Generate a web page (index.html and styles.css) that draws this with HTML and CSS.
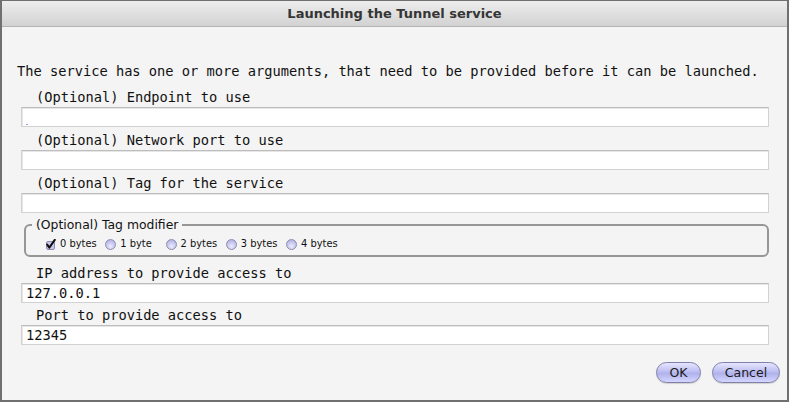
FILE: index.html
```html
<!DOCTYPE html>
<html>
<head>
<meta charset="utf-8">
<link rel="stylesheet" href="styles.css">
</head>
<body>
<div class="window">
  <div class="titlebar">Launching the Tunnel service</div>
  <div class="content">
    <p class="intro">The service has one or more arguments, that need to be provided before it can be launched.</p>

    <div class="group first">
      <div class="label">(Optional) Endpoint to use</div>
      <div class="input focused"></div>
    </div>
    <div class="group">
      <div class="label">(Optional) Network port to use</div>
      <div class="input"></div>
    </div>
    <div class="group">
      <div class="label">(Optional) Tag for the service</div>
      <div class="input"></div>
    </div>

    <fieldset class="options">
      <legend>(Optional) Tag modifier</legend>
      <div class="choices">
        <div class="choice">
          <svg class="check" width="11" height="11" viewBox="0 0 11 11">
            <rect x="1.5" y="2.5" width="8" height="8" rx="1.5" fill="#c9c9ef" stroke="#8d8db3" stroke-width="1"/>
            <path d="M2.2 5.6 L4.3 8.6 L9.8 0.8" fill="none" stroke="#111" stroke-width="2" stroke-linecap="round" stroke-linejoin="round"/>
          </svg>
          <span>0 bytes</span>
        </div>
        <div class="choice"><span class="radio"></span><span>1 byte</span></div>
        <div class="choice"><span class="radio"></span><span>2 bytes</span></div>
        <div class="choice"><span class="radio"></span><span>3 bytes</span></div>
        <div class="choice"><span class="radio"></span><span>4 bytes</span></div>
      </div>
    </fieldset>

    <div class="group after-set">
      <div class="label">IP address to provide access to</div>
      <div class="input">127.0.0.1</div>
    </div>
    <div class="group tight">
      <div class="label">Port to provide access to</div>
      <div class="input">12345</div>
    </div>

    <div class="buttons">
      <button class="btn ok">OK</button>
      <button class="btn cancel">Cancel</button>
    </div>
  </div>
</div>
</body>
</html>
```

FILE: styles.css
```css
html, body {
  margin: 0;
  padding: 0;
}
body {
  width: 789px;
  height: 402px;
  overflow: hidden;
  background: #f4f4f4;
}
.window {
  width: 789px;
  height: 402px;
  box-sizing: border-box;
  border: 2px solid #707070;
  border-top-width: 1px;
  background: #f4f4f4;
  display: flex;
  flex-direction: column;
}
.titlebar {
  height: 25px;
  flex: none;
  border-bottom: 1px solid #b4b4b4;
  background: linear-gradient(#ededed, #d2d2d2);
  display: flex;
  align-items: center;
  justify-content: center;
  font-family: "DejaVu Sans", sans-serif;
  font-weight: bold;
  font-size: 13px;
  color: #353535;
}
.content {
  flex: 1;
  display: flex;
  flex-direction: column;
  font-family: "DejaVu Sans Mono", monospace;
  font-size: 13.7px;
  line-height: 14px;
  color: #111;
}
.intro {
  margin: 37px 0 0 15px;
  white-space: nowrap;
}
.group {
  display: flex;
  flex-direction: column;
  margin-top: 6px;
}
.group.first {
  margin-top: 12px;
}
.group.after-set {
  margin-top: 9px;
}
.group.tight {
  margin-top: 5px;
}
.label {
  margin-left: 34px;
  height: 14px;
}
.input {
  margin: 3px 18px 0 19px;
  height: 18px;
  box-sizing: content-box;
  background: #fff;
  border: 1px solid #d2d2d2;
  border-top-color: #bdbdbd;
  box-shadow: inset 1px 1px 0 #e6e6e6;
  padding: 0 4px;
  line-height: 19px;
  color: #111;
}
.input.focused {
  position: relative;
}
.input.focused::after {
  content: "";
  position: absolute;
  left: 4px;
  bottom: 1px;
  width: 2px;
  height: 1px;
  background: #9a9ae6;
}
.options {
  margin: 5px 18px 0 22px;
  padding: 6px 8px 5px 6px;
  border: 2px solid #969696;
  border-radius: 6px;
  min-width: 0;
}
.options legend {
  padding: 0 4px;
  font-family: "DejaVu Sans", sans-serif;
  font-size: 12.4px;
  line-height: 14px;
  color: #111;
}
.choices {
  display: flex;
  margin-left: 13px;
  height: 12px;
  align-items: center;
  font-family: "DejaVu Sans", sans-serif;
  font-size: 9.9px;
  color: #111;
}
.choice {
  width: 60.25px;
  display: flex;
  align-items: center;
  gap: 4px;
  flex: none;
}
.check {
  flex: none;
}
.radio {
  flex: none;
  width: 9px;
  height: 9px;
  border-radius: 50%;
  border: 1px solid #8e8eae;
  background: radial-gradient(circle at 50% 70%, #ececff 0%, #c5c5ee 55%, #a9a9d8 100%);
}
.buttons {
  display: flex;
  justify-content: flex-end;
  gap: 11px;
  margin: 17px 7px 0 0;
}
.btn {
  height: 21px;
  border-radius: 11px;
  border: 1px solid #7f80aa;
  background: linear-gradient(#e6e6ff 0%, #c2c3f3 40%, #b0b2ec 55%, #d4d6ff 100%);
  font-family: "DejaVu Sans", sans-serif;
  font-size: 12.5px;
  color: #1a1a1a;
  padding: 0;
  line-height: 19px;
  box-shadow: 0 1px 1px rgba(0,0,0,0.15);
}
.btn.ok {
  width: 45px;
}
.btn.cancel {
  width: 68px;
}
```
